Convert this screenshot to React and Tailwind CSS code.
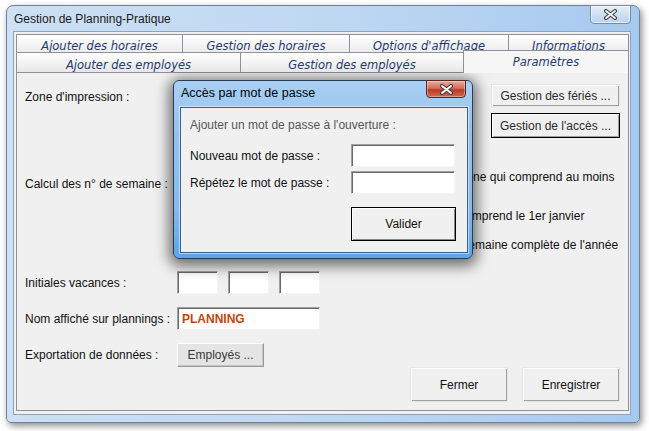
import React from "react";

const backTabs = [
  { name: "Ajouter des horaires", w: "w-[166px]" },
  { name: "Gestion des horaires", w: "w-[167px]" },
  { name: "Options d'affichage", w: "w-[159px]" },
  { name: "Informations", w: "w-[121px]" },
];

const frontTabs = [
  { name: "Ajouter des employés", w: "w-[224px]" },
  { name: "Gestion des employés", w: "w-[223px]" },
];

const raised = "bg-[#f0f0f0] border border-[#e6e6e6] shadow-[inset_1px_1px_0_#ffffff,inset_-1px_-1px_0_#a0a0a0]";
const sunken = "bg-white border border-t-[#a0a0a0] border-l-[#a0a0a0] border-b-[#f4f4f4] border-r-[#f4f4f4] shadow-[inset_1px_1px_0_#6a6a6a]";

function CloseGlyph({ fill = "#f4f4f4" }) {
  return (
    <svg width="15" height="11" viewBox="0 0 15 11">
      <path d="M3 2 L12 9 M12 2 L3 9" stroke="#3b3b3b" strokeWidth="4" strokeLinecap="round" />
      <path d="M3 2 L12 9 M12 2 L3 9" stroke={fill} strokeWidth="2" strokeLinecap="round" />
    </svg>
  );
}

function PasswordDialog() {
  return (
    <div className="absolute left-[173px] top-[80px] w-[300px] h-[179px] rounded-[6px] border border-[#2b3b52] bg-[linear-gradient(180deg,#a9d0f4_0%,#94c2ef_30%,#86bbef_70%,#5aa6ec_100%)] shadow-[0_3px_14px_4px_rgba(0,0,0,0.55)] flex flex-col">
      <div className="h-[26px] flex items-start justify-between pl-[7px] pr-[6px]">
        <span className="mt-[5px] text-[12.5px] leading-[14px] text-black">Accès par mot de passe</span>
        <div className="w-[40px] h-[18px] -mt-px rounded-b-[4px] border border-[#5b2520] bg-[linear-gradient(180deg,#e8a998_0%,#d2705f_45%,#b8392a_55%,#cf6a50_100%)] shadow-[inset_0_0_0_1px_rgba(255,255,255,0.35)] flex items-center justify-center">
          <CloseGlyph fill="#ffffff" />
        </div>
      </div>
      <div className="ml-[6px] w-[288px] h-[146px] border border-[#3f5d80] bg-[#f0f0f0] shadow-[0_0_0_1px_rgba(255,255,255,0.5)] pl-[9px] pt-[10px]">
        <p className="text-[12px] leading-[14px] text-[#555]">Ajouter un mot de passe à l'ouverture :</p>
        <div className="mt-[12px] grid grid-cols-[161px_104px] gap-y-[4px] items-center text-[12px] leading-[14px] text-[#111]">
          <span>Nouveau mot de passe :</span>
          <div className={`h-[23px] ${sunken}`}></div>
          <span>Répétez le mot de passe :</span>
          <div className={`h-[23px] ${sunken}`}></div>
        </div>
        <div className="mt-[13px] ml-[161px] w-[105px] h-[34px] border border-black bg-[#f0f0f0] shadow-[inset_1px_1px_0_#ffffff,inset_-1px_-1px_0_#8a8a8a] flex items-center justify-center text-[12px] text-[#111]">
          Valider
        </div>
      </div>
    </div>
  );
}

export default function App() {
  return (
    <div className="relative w-[649px] h-[431px] bg-white overflow-hidden pl-[6px] pt-[5px] font-['Liberation_Sans',Arial,sans-serif]">
      <div className="w-[634px] h-[418px] rounded-t-[7px] rounded-b-[5px] border border-[#6f8197] bg-[linear-gradient(90deg,#cde0f4_0%,#bfd8f2_50%,#a6c9ef_100%)] shadow-[2px_3px_7px_rgba(0,0,0,0.45)] flex flex-col">
        <div className="h-[25px] flex items-start justify-between pl-[7px] pr-[8px]">
          <span className="mt-[6px] text-[12px] leading-[14px] text-[#1b1b1b]">Gestion de Planning-Pratique</span>
          <div className="w-[41px] h-[19px] -mt-px rounded-b-[4px] border border-[#7b8ca2] bg-[linear-gradient(180deg,#e4eef9_0%,#cfdff1_50%,#bcd3ee_100%)] shadow-[inset_0_0_0_1px_rgba(255,255,255,0.6)] flex items-center justify-center">
            <CloseGlyph fill="#eef2f7" />
          </div>
        </div>
        <div className="ml-[6px] w-[618px] h-[384px] border border-[#8aa3c0] bg-[#f0f0f0] flex flex-col pt-[2px]">
          <div className="ml-[2px] flex h-[18px] overflow-hidden font-['DejaVu_Sans',Verdana,sans-serif] italic text-[11.5px] text-[#1f3a6f]">
            {backTabs.map((t, i) => (
              <div
                key={t.name}
                className={`${t.w} border-t border-l border-[#8e9199] ${i === backTabs.length - 1 ? "border-r" : ""} bg-[linear-gradient(180deg,#ffffff_0%,#ececec_100%)] flex justify-center leading-[14px] pt-[4px]`}
              >
                {t.name}
              </div>
            ))}
          </div>
          <div className="ml-[2px] flex h-[20px] font-['DejaVu_Sans',Verdana,sans-serif] italic text-[11.5px] text-[#1f3a6f] relative z-10">
            {frontTabs.map((t) => (
              <div
                key={t.name}
                className={`${t.w} border-t border-l border-[#8e9199] bg-[linear-gradient(180deg,#ffffff_0%,#e7e7e7_100%)] flex justify-center leading-[14px] pt-[5px] overflow-hidden`}
              >
                {t.name}
              </div>
            ))}
            <div className="w-[166px] -mt-[2px] h-[23px] border-t border-l border-r border-[#8e9199] bg-[#f6f6f6] flex justify-center pt-[4px] leading-[14px]">
              Paramètres
            </div>
          </div>
          <div className="ml-[2px] mr-[1px] flex-1 mb-[3px] border border-[#8e9199] bg-[#f0f0f0] pl-[8px] pr-[8px] pt-[11px] text-[12px] leading-[14px] text-[#111]">
            <div className="flex justify-between h-[54px]">
              <span className="mt-[6px]">Zone d'impression :</span>
              <div className="flex flex-col gap-[6px] w-[129px]">
                <div className={`h-[23px] ${raised} flex items-center justify-center text-[#2a2a2a]`}>Gestion des fériés ...</div>
                <div className="h-[25px] border border-black bg-[#f0f0f0] shadow-[inset_1px_1px_0_#ffffff,inset_-1px_-1px_0_#a0a0a0] flex items-center justify-center text-[#2a2a2a]">
                  Gestion de l'accès ...
                </div>
              </div>
            </div>
            <div className="flex h-[133px]">
              <span className="w-[348px] mt-[39px]">Calcul des n° de semaine :</span>
              <div className="flex flex-col">
                <div className="mt-[32px] flex items-center gap-[4px] whitespace-nowrap">
                  <span className="w-[12px] h-[12px] rounded-full border border-[#8e8f8f] bg-white"></span>
                  <span>Première semaine qui comprend au moins</span>
                </div>
                <div className="mt-[25px] flex items-center gap-[4px] whitespace-nowrap">
                  <span className="w-[12px] h-[12px] rounded-full border border-[#8e8f8f] bg-white"></span>
                  <span>Semaine qui comprend le 1er janvier</span>
                </div>
                <div className="mt-[15px] ml-[6px] flex items-center gap-[4px] whitespace-nowrap">
                  <span className="w-[12px] h-[12px] rounded-full border border-[#8e8f8f] bg-white"></span>
                  <span>La première semaine complète de l'année</span>
                </div>
              </div>
            </div>
            <div className="grid grid-cols-[152px_auto] gap-y-[13px] items-center">
              <span>Initiales vacances :</span>
              <div className="flex gap-[10px]">
                <div className={`w-[41px] h-[23px] ${sunken}`}></div>
                <div className={`w-[41px] h-[23px] ${sunken}`}></div>
                <div className={`w-[41px] h-[23px] ${sunken}`}></div>
              </div>
              <span>Nom affiché sur plannings :</span>
              <div className={`w-[143px] h-[23px] ${sunken} flex items-center pl-[4px] font-bold text-[#c2460c]`}>PLANNING</div>
              <span>Exportation de données :</span>
              <div className="w-[87px] h-[24px] bg-[#e4e4e4] border border-t-white border-l-white border-r-[#9a9a9a] border-b-[#9a9a9a] shadow-[inset_-1px_-1px_0_#c4c4c4] flex items-center justify-center text-[#3a3a3a]">
                Employés ...
              </div>
            </div>
            <div className="flex justify-end gap-[14px]">
              <div className={`w-[98px] h-[35px] ${raised} flex items-center justify-center`}>Fermer</div>
              <div className={`w-[98px] h-[35px] ${raised} flex items-center justify-center`}>Enregistrer</div>
            </div>
          </div>
        </div>
      </div>
      <PasswordDialog />
    </div>
  );
}
